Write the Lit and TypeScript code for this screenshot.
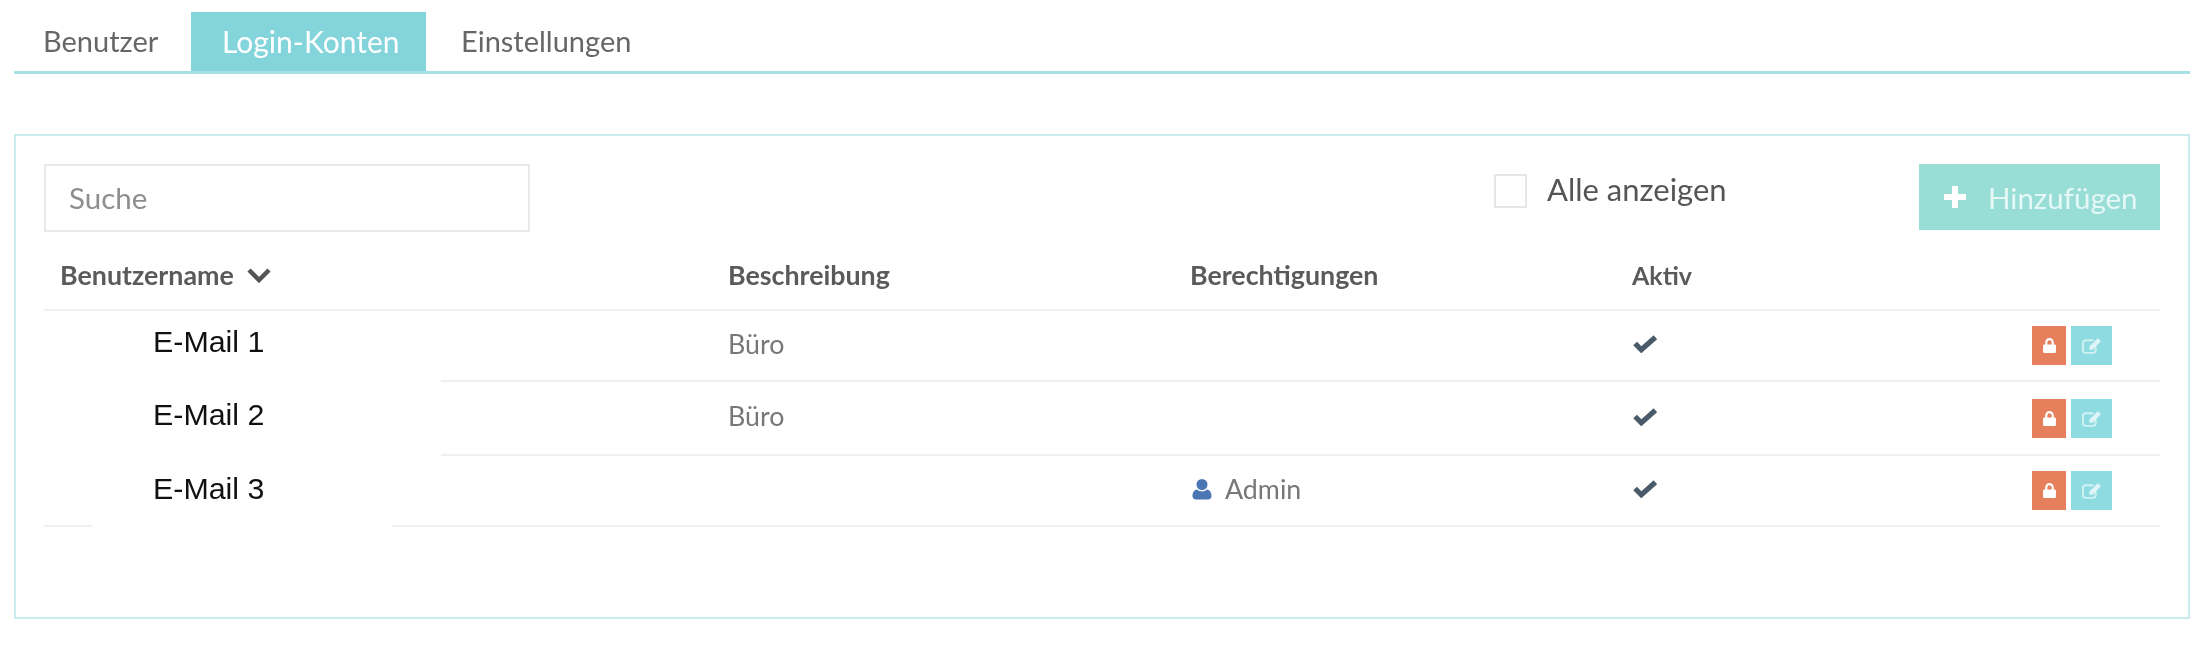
import { LitElement, html, css, svg } from "lit";
import { customElement } from "lit/decorators.js";

const lock = html`<svg class="ic" viewBox="2 1 12 14"><path fill="#fff" d="M3 7h1V5a4 4 0 0 1 8 0v2h1a1 1 0 0 1 1 1v6a1 1 0 0 1-1 1H3a1 1 0 0 1-1-1V8a1 1 0 0 1 1-1zm3 0h4V5a2 2 0 0 0-4 0z"/></svg>`;
const edit = html`<svg class="ic2" viewBox="1 1 19 16"><path fill="none" stroke="#fff" stroke-opacity=".6" stroke-width="1.800" d="M14 10v3.500a2.500 2.500 0 0 1-2.500 2.500h-7A2.500 2.500 0 0 1 2 13.500v-7A2.500 2.500 0 0 1 4.500 4H12"/><path fill="#fff" fill-opacity=".7" d="M16 2l3 3-8 8H8v-3z"/></svg>`;
const check = svg`<path fill="none" stroke="#4a5a68" stroke-width="5" d="M2 9l6 6L21.500 3"/>`;

const rows = [
  { mail: "E-Mail 1", desc: "Büro", admin: false, h: 71, rule: "plain" },
  { mail: "E-Mail 2", desc: "Büro", admin: false, h: 74, rule: "plain" },
  { mail: "E-Mail 3", desc: "", admin: true, h: 71, rule: "last" },
];

@customElement("app-root")
export class AppRoot extends LitElement {
  static styles = css`
    :host { display: block; background: #fff; height: 650px; padding: 12px 14px 0; box-sizing: border-box; font-family: Lato, "Open Sans", sans-serif; color: #666; overflow: hidden; }
    .page { filter: blur(0.5px); }
    .tabs { display: flex; height: 59px; border-bottom: 3px solid #a4e0e4; }
    .tab { display: flex; align-items: center; font-size: 29px; padding: 0 0 2px 29px; width: 177px; box-sizing: border-box; }
    .tab.on { background: #83d5db; color: #fff; width: 235px; padding-left: 31px; font-size: 30px; }
    .tab.third { padding-left: 35px; width: auto; }
    .panel { margin-top: 60px; height: 485px; border: 2px solid #c8ecef; box-sizing: border-box; padding: 28px 28px 0 28px; }
    .bar { display: flex; align-items: flex-start; height: 68px; }
    .search { width: 486px; height: 68px; box-sizing: border-box; border: 2px solid #e9e9e9; padding: 0 0 2px 23px; display: flex; align-items: center; font-size: 29.500px; color: #8e8e8e; }
    .all { margin-left: 964px; margin-top: 10px; display: flex; align-items: flex-start; gap: 20px; font-size: 31px; color: #555; width: 425px; }
    .all span { line-height: 34px; margin-top: -2px; }
    .box { width: 33px; height: 34px; box-sizing: border-box; border: 2px solid #e6e6e6; }
    .add { width: 241px; height: 66px; background: #98ded7; color: #fff; display: flex; align-items: center; gap: 21px; padding-left: 24px; box-sizing: border-box; font-size: 29.500px; }
    .add svg { width: 24px; height: 24px; }
    .add span { color: #e6f8f6; }
    .grid { display: grid; grid-template-columns: 684px 462px 442px 1fr auto; align-items: center; }
    .head { height: 79px; border-bottom: 2px solid #f0f0f0; box-sizing: border-box; font-size: 26.800px; font-weight: 700; color: #5a5a5a; padding-top: 8px; }
    .head .first { padding-left: 16px; display: flex; align-items: center; gap: 13px; }
    .head .aktiv { font-size: 25px; }
    .head svg { width: 24px; height: 16px; }
    .row { font-size: 26.800px; color: #777; box-sizing: border-box; }
    .cell { margin-bottom: 4px; }
    .mail { padding-left: 109px; font-family: "Liberation Sans", Arial, sans-serif; font-size: 30.400px; color: #111; margin-bottom: 8px; }
    .row.last .mail { margin-bottom: 4px; }
    .who { display: flex; align-items: center; gap: 13px; padding-left: 2px; }
    .who svg { width: 20px; height: 22px; }
    .chk { width: 25px; height: 19px; display: block; margin-left: 1px; }
    .acts { display: flex; gap: 5px; padding-right: 48px; }
    .act { width: 34px; height: 39px; display: flex; align-items: center; justify-content: center; }
    .act.red { background: #e57f5c; }
    .act.blue { background: #8fdbe2; width: 41px; }
    .ic { width: 13px; height: 15px; }
    .ic2 { width: 20px; height: 17px; }
    .rule { display: flex; height: 2px; }
    .rule i { background: #f0f0f0; display: block; }
    .rule i.grow { flex: 1; }
    .rule.plain .gap { width: 397px; }
    .rule.last .lead { width: 48px; }
    .rule.last .gap { width: 300px; }
  `;

  render() {
    return html`
      <div class="page">
        <div class="tabs">
          <div class="tab">Benutzer</div>
          <div class="tab on">Login-Konten</div>
          <div class="tab third">Einstellungen</div>
        </div>
        <div class="panel">
          <div class="bar">
            <div class="search">Suche</div>
            <div class="all"><div class="box"></div><span>Alle anzeigen</span></div>
            <div class="add">
              <svg viewBox="0 0 24 24"><path fill="#fff" d="M9 1h6v8h8v6h-8v8H9v-8H1V9h8z"/></svg>
              <span>Hinzufügen</span>
            </div>
          </div>
          <div class="grid head">
            <div class="first">Benutzername
              <svg viewBox="0 0 24 16"><path fill="none" stroke="#555" stroke-width="4.500" d="M2 3l10 10L22 3"/></svg>
            </div>
            <div>Beschreibung</div>
            <div>Berechtigungen</div>
            <div class="aktiv">Aktiv</div>
            <div></div>
          </div>
          ${rows.map(
            (r) => html`
              <div class="grid row ${r.rule}" style="height:${r.h - 2}px">
                <div class="mail">${r.mail}</div>
                <div class="cell">${r.desc}</div>
                <div class="cell">
                  ${r.admin
                    ? html`<div class="who">
                        <svg viewBox="0 0 20 22"><path fill="#4a76b4" d="M10 1a5.500 5.500 0 0 1 5.500 5.500A5.500 5.500 0 0 1 10 12a5.500 5.500 0 0 1-5.500-5.500A5.500 5.500 0 0 1 10 1zM5 11.500c1.300 1.200 3 2 5 2s3.700-.8 5-2c2.800.4 4.500 3 4.500 6.500 0 2.300-1.500 3.500-3.500 3.500H4C2 21.500.5 20.300.5 18c0-3.500 1.700-6.100 4.500-6.500z"/></svg>
                        Admin
                      </div>`
                    : ""}
                </div>
                <div class="cell"><svg class="chk" viewBox="0 0 24 18">${check}</svg></div>
                <div class="acts">
                  <div class="act red">${lock}</div>
                  <div class="act blue">${edit}</div>
                </div>
              </div>
              <div class="rule ${r.rule}">
                ${r.rule === "last" ? html`<i class="lead"></i>` : ""}
                <span class="gap"></span>
                <i class="grow"></i>
              </div>
            `
          )}
        </div>
      </div>
    `;
  }
}
